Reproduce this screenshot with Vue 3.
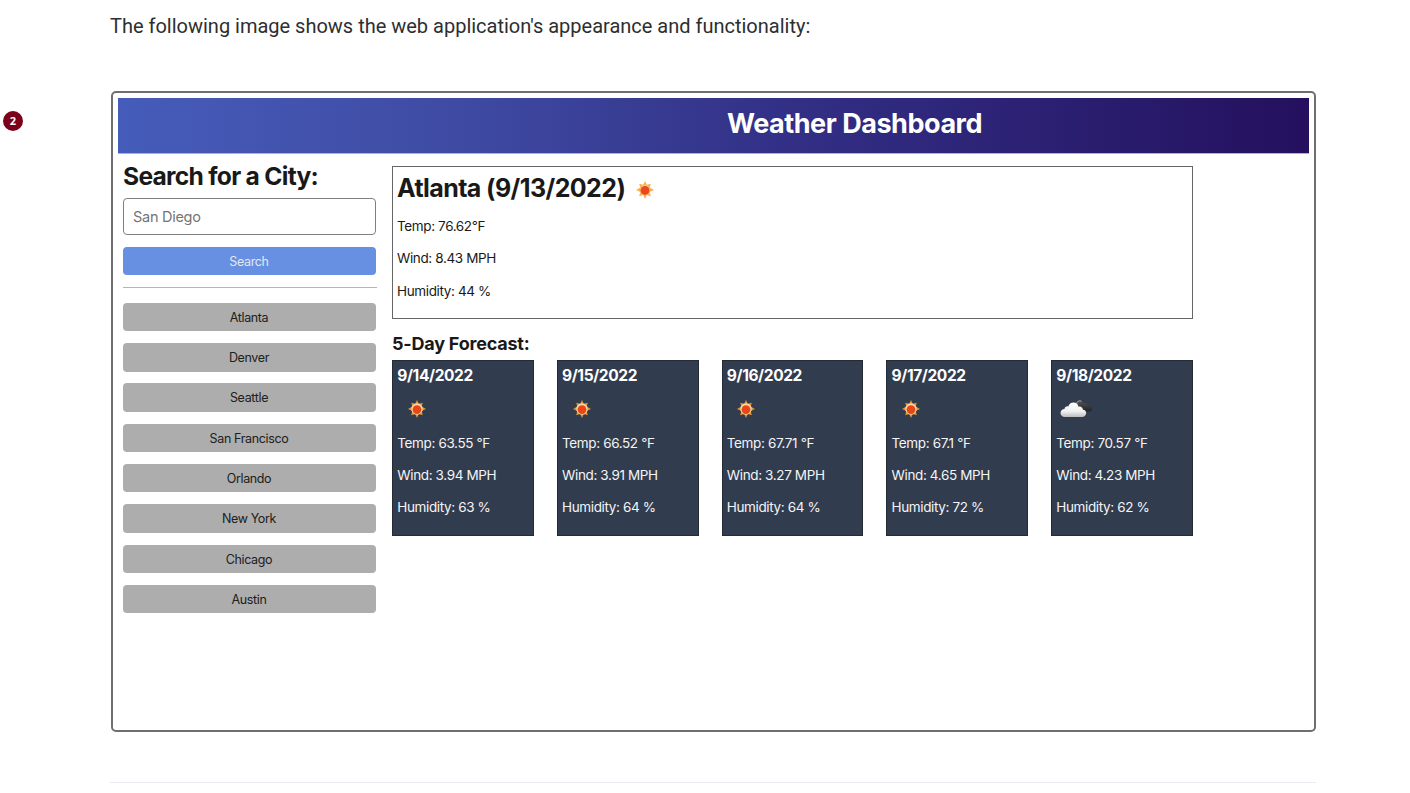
<script setup>
const cities = ['Atlanta', 'Denver', 'Seattle', 'San Francisco', 'Orlando', 'New York', 'Chicago', 'Austin']
const forecast = [
  { date: '9/14/2022', icon: 'sun', temp: '63.55', wind: '3.94', humidity: 63 },
  { date: '9/15/2022', icon: 'sun', temp: '66.52', wind: '3.91', humidity: 64 },
  { date: '9/16/2022', icon: 'sun', temp: '67.71', wind: '3.27', humidity: 64 },
  { date: '9/17/2022', icon: 'sun', temp: '67.1', wind: '4.65', humidity: 72 },
  { date: '9/18/2022', icon: 'cloud', temp: '70.57', wind: '4.23', humidity: 62 },
]
</script>

<template>
  <div class="page">
    <span class="badge">2</span>
    <p class="intro">The following image shows the web application's appearance and functionality:</p>
    <div class="frame">
      <header class="header"><h1>Weather Dashboard</h1></header>
      <div class="body">
        <aside class="side">
          <h2 class="side-title"><span>Search for a City:</span></h2>
          <input class="field" placeholder="San Diego" />
          <button class="btn search">Search</button>
          <div class="line"></div>
          <div class="cities">
            <button v-for="c in cities" :key="c" class="btn city">{{ c }}</button>
          </div>
        </aside>
        <main class="main">
          <section class="today">
            <h2 class="today-title">
              <span>Atlanta (9/13/2022)</span>
              <svg class="sun" viewBox="0 0 18 18">
                <path d="M9 0l1.800 3.800 4-1.100-1.100 3.900L18 9l-4.300 2.100 1.100 4.100-4-1.100L9 18l-1.800-3.900-4 1.100 1.100-4.100L0 9l4.300-2.400-1.100-3.900 4 1.100z" fill="#f6b04e" />
                <circle cx="9" cy="9" r="5.3" fill="#fbc983" />
                <circle cx="9" cy="9.4" r="4.5" fill="#ea481e" />
              </svg>
            </h2>
            <p>Temp: 76.62°F</p>
            <p>Wind: 8.43 MPH</p>
            <p>Humidity: 44 %</p>
          </section>
          <h3 class="forecast-title"><span>5-Day Forecast:</span></h3>
          <div class="cards">
            <article v-for="d in forecast" :key="d.date" class="card">
              <h4>{{ d.date }}</h4>
              <div class="icon">
                <svg v-if="d.icon === 'sun'" class="sun" viewBox="0 0 18 18">
                  <path d="M9 0l1.800 3.800 4-1.100-1.100 3.900L18 9l-4.300 2.100 1.100 4.100-4-1.100L9 18l-1.800-3.900-4 1.100 1.100-4.100L0 9l4.300-2.400-1.100-3.900 4 1.100z" fill="#dc962c" />
                  <circle cx="9" cy="9" r="5.7" fill="#f8d8a0" />
                  <circle cx="9" cy="9.6" r="4.4" fill="#e9451b" />
                </svg>
                <svg v-else class="cloud" viewBox="0 0 33 18">
                  <defs>
                    <linearGradient id="cloud-front" x1="0" y1="0" x2="0" y2="1">
                      <stop offset="0" stop-color="#fff" />
                      <stop offset=".6" stop-color="#f1f1f1" />
                      <stop offset="1" stop-color="#bdbdbd" />
                    </linearGradient>
                    <linearGradient id="cloud-back" x1="0" y1="0" x2="0" y2="1">
                      <stop offset="0" stop-color="#555" />
                      <stop offset="1" stop-color="#222" />
                    </linearGradient>
                  </defs>
                  <path d="M16 4C16 1.400 18 .5 20 .8c1.600.2 2.600 1 3.200 2.500 2.200-.6 4.600.3 4.900 3 2.500.1 4.200 1.600 4.100 3.100-.2 1.500-2 2-4 2h-9z" fill="url(#cloud-back)" />
                  <path d="M16.600 3.600C17 1.400 19 .3 21.400 1.100" fill="none" stroke="#aaa" stroke-width="1" />
                  <path d="M5 17C2 17 .5 15.300.5 13c0-2.200 1.600-3.900 4-4 .2-1.800 1.800-3 3.800-2.600C9.100 3.900 11 2.500 13.400 2.500c2.700 0 4.500 1.600 5 4 2.500-.5 4.500 1 4.500 3.200 2.100.1 3.300 1.500 3.300 3.400 0 2.400-1.700 3.900-4.200 3.900z" fill="url(#cloud-front)" />
                </svg>
              </div>
              <p>Temp: {{ d.temp }} °F</p>
              <p>Wind: {{ d.wind }} MPH</p>
              <p>Humidity: {{ d.humidity }} %</p>
            </article>
          </div>
        </main>
      </div>
    </div>
    <div class="divider"></div>
  </div>
</template>

<style>
html, body { margin: 0; background: #fff; overflow: hidden; }
</style>

<style scoped>
* { box-sizing: border-box; }
h1, h2, h3, h4, p { margin: 0; }
.page { position: relative; height: 793px; padding: 11px 94px 0 110px; overflow: hidden; }
.badge { position: absolute; left: 3px; top: 111px; width: 20px; height: 20px; border-radius: 50%; background: #7c0019; color: #fff; font: bold 11px/19px "Open Sans", sans-serif; text-align: center; }
.intro { height: 80px; font: 20px/30px Roboto, sans-serif; letter-spacing: -0.005px; color: #2d2e30; white-space: nowrap; }
.frame { width: 1205px; height: 641px; margin-left: 1px; border: 2px solid #6f6f71; border-radius: 5px; padding: 5px; font-family: Inter, sans-serif; color: #191919; }
.header { height: 56px; padding-left: 282px; background: linear-gradient(90deg, #465cba 0%, #3f4ba3 28%, #322f85 57%, #24105e 100%); border-bottom: 1px solid #aeb0dc; background-clip: padding-box; }
.header h1 { font-size: 27px; line-height: 51px; text-align: center; color: #fff; font-weight: 700; letter-spacing: -0.46px; }
.body { display: flex; gap: 16px; padding: 11.500px 0 0 5px; }
.side { width: 253px; flex: none; }
.side-title { height: 32px; font-size: 24.600px; line-height: 21px; font-weight: 700; white-space: nowrap; letter-spacing: -0.72px; }
.field { display: block; width: 253px; height: 37.500px; border: 1px solid #808080; border-radius: 4px; padding: 0 9px; background: #fff; font: 14.500px Inter, sans-serif; letter-spacing: -0.28px; outline: 0; }
.field::placeholder { color: #757575; opacity: 1; }
.btn { display: block; width: 253px; height: 28.400px; border: 0; border-radius: 4px; padding: 1px 1px 0 0; font: 12.500px/28px Inter, sans-serif; letter-spacing: -0.36px; text-align: center; }
.search { margin-top: 11.500px; background: #6790e2; color: #e2e7f2; }
.line { width: 254px; height: 1px; margin: 12px 0 14.900px; background: #b5b5b5; }
.cities { display: flex; flex-direction: column; gap: 11.950px; }
.city { background: #adadad; color: #202020; }
.main { width: 801px; flex: none; }
.today { height: 153px; border: 1px solid #666; padding: 4px; }
.today-title { display: flex; align-items: center; height: 34px; gap: 11px; font-size: 25px; font-weight: 700; letter-spacing: -0.58px; white-space: nowrap; }
.today-title .sun { margin-top: 4px; }
.sun { width: 18px; height: 18px; display: block; }
.today p, .card p { font-size: 13.500px; line-height: 20px; height: 32.400px; letter-spacing: -0.37px; white-space: nowrap; }
.today p:first-of-type { margin-top: 11.300px; }
.forecast-title { height: 41px; padding-top: 12.300px; font-size: 18px; line-height: 26px; font-weight: 700; letter-spacing: -0.22px; white-space: nowrap; }
.cards { display: grid; grid-template-columns: repeat(5, 1fr); gap: 22.800px; }
.card { height: 176px; background: #323c4f; border: 1px solid #242b35; padding: 5.500px 4.300px; color: #f4f5f6; }
.card h4 { font-size: 15.500px; line-height: 20px; font-weight: 700; letter-spacing: -0.38px; color: #fff; white-space: nowrap; }
.icon { height: 46.500px; padding: 14px 0 0 10.500px; }
.cloud { width: 33px; height: 18px; margin-left: -6.500px; display: block; }
.divider { width: 1206px; height: 1px; margin-top: 50px; background: #e8ecf0; }
</style>
